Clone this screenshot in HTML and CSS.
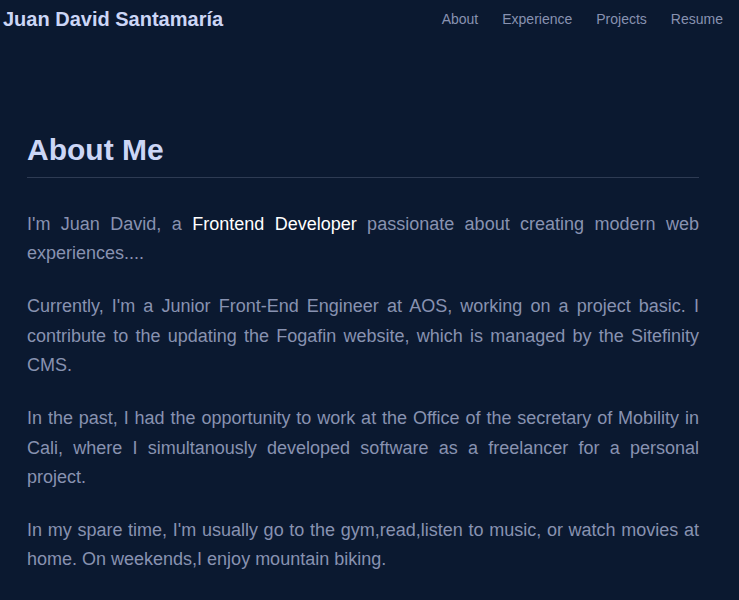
FILE: index.html
```html
<!DOCTYPE html>
<html lang="en">
<head>
<meta charset="utf-8">
<title>Juan David Santamaría</title>
<link rel="stylesheet" href="styles.css">
</head>
<body>
<header class="nav">
  <a class="brand" href="#">Juan David Santamaría</a>
  <nav class="links">
    <a href="#about">About</a>
    <a href="#experience">Experience</a>
    <a href="#projects">Projects</a>
    <a href="#resume">Resume</a>
  </nav>
</header>
<main class="content">
  <section class="about" id="about">
    <h2 class="title">About Me</h2>
    <p>I'm Juan David, a <span class="hl">Frontend Developer</span> passionate about creating modern web experiences....</p>
    <p>Currently, I'm a Junior Front-End Engineer at AOS, working on a project basic. I contribute to the updating the Fogafin website, which is managed by the Sitefinity CMS.</p>
    <p>In the past, I had the opportunity to work at the Office of the secretary of Mobility in Cali, where I simultanously developed software as a freelancer for a personal project.</p>
    <p>In my spare time, I'm usually go to the gym,read,listen to music, or watch movies at home. On weekends,I enjoy mountain biking.</p>
  </section>
</main>
</body>
</html>
```
FILE: styles.css
```css
* { box-sizing: border-box; }
html, body {
  margin: 0;
  background: #0b1930;
  font-family: "Liberation Sans", Arial, sans-serif;
}
a { text-decoration: none; }
.nav {
  display: flex;
  align-items: center;
  justify-content: space-between;
  height: 38px;
  padding: 0 16px 0 3px;
}
.brand {
  color: #ccd6f6;
  font-weight: bold;
  font-size: 20px;
}
.links {
  display: flex;
  gap: 24px;
}
.links a {
  color: #8892b0;
  font-size: 14px;
}
.content {
  padding: 94px 40px 0 27px;
}
.title {
  margin: 0;
  color: #ccd6f6;
  font-size: 30px;
  font-weight: bold;
  line-height: 1.2;
  padding-bottom: 9px;
  border-bottom: 1px solid #2e3b53;
}
.about p {
  margin: 0 0 23.6px;
  color: #8892b0;
  font-size: 18px;
  line-height: 29.4px;
  text-align: justify;
}
.about .title + p { margin-top: 32px; }
.hl { color: #ffffff; }
```
